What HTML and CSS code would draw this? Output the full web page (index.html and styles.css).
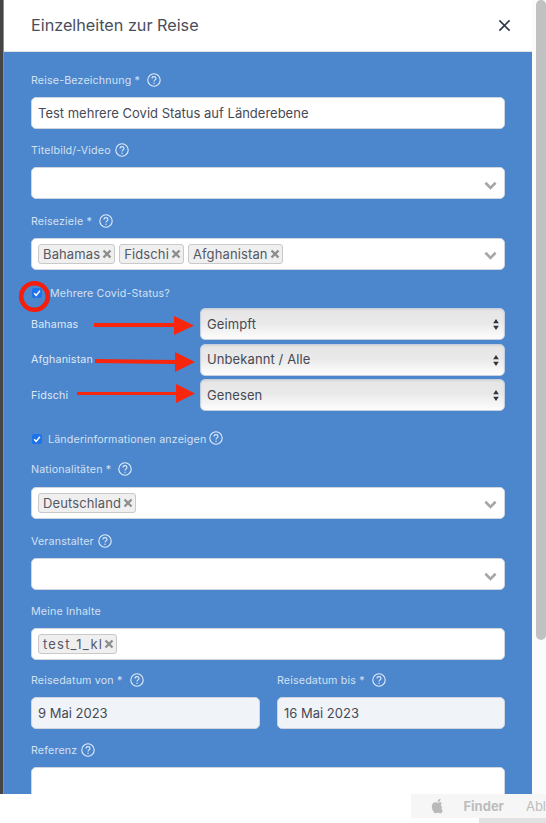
FILE: index.html
```html
<!DOCTYPE html>
<html lang="de">
<head>
<meta charset="utf-8">
<title>Einzelheiten zur Reise</title>
<link rel="stylesheet" href="styles.css">
</head>
<body>
<svg class="defs" width="0" height="0">
  <symbol id="help" viewBox="0 0 14 14">
    <circle cx="7" cy="7" r="6.200" fill="none" stroke="currentColor" stroke-width="1.100"/>
    <path d="M5 5.500C5 4.300 5.900 3.600 7 3.600s2 .8 2 1.800c0 1.500-2 1.500-2 3.100" fill="none" stroke="currentColor" stroke-width="1.100"/>
    <circle cx="7" cy="10.300" r=".7" fill="currentColor"/>
  </symbol>
  <symbol id="chev" viewBox="0 0 14 9">
    <path d="M1.500 1.500L7 7l5.500-5.500" fill="none" stroke="currentColor" stroke-width="2.800"/>
  </symbol>
  <symbol id="x" viewBox="0 0 10 10">
    <path d="M1.500 1.500l7 7M8.500 1.500l-7 7" fill="none" stroke="currentColor" stroke-width="2.400"/>
  </symbol>
  <symbol id="tick" viewBox="0 0 12 12">
    <path d="M2.500 6.300l2.500 2.500 4.500-5.500" fill="none" stroke="#fff" stroke-width="1.700"/>
  </symbol>
  <symbol id="updown" viewBox="0 0 7 14">
    <path d="M3.500 0.500L6.800 5.500H.2zM3.500 13.500L.2 8.500h6.600z" fill="#30343f"/>
  </symbol>
</svg>

<div class="screen">
  <div class="edge"></div>
  <main class="modal">
    <header class="modal-head">
      <h1 class="modal-title">Einzelheiten zur Reise</h1>
      <svg class="close" viewBox="0 0 14 14"><path d="M1.500 1.500l11 11M12.500 1.500l-11 11" fill="none" stroke="#2d3644" stroke-width="1.700"/></svg>
    </header>
    <form class="modal-body">
      <div class="field">
        <div class="label">Reise-Bezeichnung * <svg class="help star"><use href="#help"/></svg></div>
        <div class="control">Test mehrere Covid Status auf Länderebene</div>
      </div>
      <div class="field">
        <div class="label">Titelbild/-Video <svg class="help"><use href="#help"/></svg></div>
        <div class="control"><svg class="chev"><use href="#chev"/></svg></div>
      </div>
      <div class="field tight">
        <div class="label">Reiseziele * <svg class="help star"><use href="#help"/></svg></div>
        <div class="control multi">
          <span class="tag">Bahamas<svg class="tag-x"><use href="#x"/></svg></span>
          <span class="tag">Fidschi<svg class="tag-x"><use href="#x"/></svg></span>
          <span class="tag">Afghanistan<svg class="tag-x"><use href="#x"/></svg></span>
          <svg class="chev"><use href="#chev"/></svg>
        </div>
      </div>
      <div class="check-row covid">
        <span class="box"><svg class="tick"><use href="#tick"/></svg></span>
        <span class="check-text">Mehrere Covid-Status?</span>
      </div>
      <div class="status-list">
        <div class="status"><span class="status-name">Bahamas</span><div class="native">Geimpft<svg class="updown"><use href="#updown"/></svg></div></div>
        <div class="status"><span class="status-name">Afghanistan</span><div class="native">Unbekannt / Alle<svg class="updown"><use href="#updown"/></svg></div></div>
        <div class="status"><span class="status-name">Fidschi</span><div class="native">Genesen<svg class="updown"><use href="#updown"/></svg></div></div>
      </div>
      <div class="check-row info">
        <span class="box"><svg class="tick"><use href="#tick"/></svg></span>
        <span class="check-text">Länderinformationen anzeigen</span>
        <svg class="help"><use href="#help"/></svg>
      </div>
      <div class="field nat">
        <div class="label">Nationalitäten * <svg class="help star"><use href="#help"/></svg></div>
        <div class="control multi">
          <span class="tag">Deutschland<svg class="tag-x"><use href="#x"/></svg></span>
          <svg class="chev"><use href="#chev"/></svg>
        </div>
      </div>
      <div class="field">
        <div class="label">Veranstalter <svg class="help"><use href="#help"/></svg></div>
        <div class="control"><svg class="chev"><use href="#chev"/></svg></div>
      </div>
      <div class="field inhalte">
        <div class="label">Meine Inhalte</div>
        <div class="control multi"><span class="tag tag-wide">test_1_kl<svg class="tag-x"><use href="#x"/></svg></span></div>
      </div>
      <div class="date-row">
        <div class="field">
          <div class="label">Reisedatum von * <svg class="help star"><use href="#help"/></svg></div>
          <div class="control date">9 Mai 2023</div>
        </div>
        <div class="field">
          <div class="label">Reisedatum bis * <svg class="help star"><use href="#help"/></svg></div>
          <div class="control date">16 Mai 2023</div>
        </div>
      </div>
      <div class="field">
        <div class="label">Referenz <svg class="help"><use href="#help"/></svg></div>
        <div class="control area"></div>
      </div>
    </form>
  </main>
  <div class="scrollbar"><div class="thumb"></div></div>
</div>

<svg class="marks" viewBox="0 0 546 823">
  <circle class="ring" cx="34.500" cy="296.500" r="13.300"/>
  <path class="arrow" d="M94 323h80v-7l20 9.500-20 9.500v-8H94z"/>
  <path class="arrow" d="M95 359l80 1v-8l20 10-20 10v-8l-80-1z"/>
  <path class="arrow" d="M77 392h99v-8l19 9.500-19 9.500v-8H77z"/>
</svg>

<div class="menubar">
  <svg class="apple" viewBox="0 0 24 24"><path d="M18.710 19.500c-.83 1.240-1.710 2.450-3.050 2.470-1.340.03-1.770-.79-3.290-.79-1.530 0-2 .77-3.270.82-1.310.05-2.300-1.320-3.140-2.530C4.250 17 2.940 12.450 4.700 9.390c.87-1.520 2.430-2.480 4.120-2.510 1.280-.02 2.500.87 3.290.87.78 0 2.260-1.070 3.290-.91.43.02 1.650.17 2.430 1.320-.06.04-1.450.85-1.440 2.530.02 2.010 1.760 2.680 1.780 2.690-.02.05-.28.95-.92 1.880M13 3.500c.73-.83 1.940-1.460 2.940-1.500.13 1.170-.34 2.350-1.040 3.190-.69.85-1.830 1.510-2.950 1.420-.15-1.150.41-2.350 1.050-3.110z"/></svg>
  <span class="menu-strong">Finder</span>
  <span class="menu-item">Abl</span>
</div>
<div class="menu-shadow"></div>
</body>
</html>
```

FILE: styles.css
```css
* { box-sizing: border-box; }
html, body { margin: 0; height: 100%; overflow: hidden; background: #fff; }
body { font-family: Inter, "Noto Sans", sans-serif; color: #464a55; position: relative; }
.defs { position: absolute; }

.screen { display: flex; height: 823px; align-items: flex-start; }
.edge { width: 4px; height: 794px; background: #454545; border-right: 1px solid #8f8f8f; flex: none; }
.modal { width: 528px; height: 794px; overflow: hidden; flex: none; display: flex; flex-direction: column; }
.modal-head { height: 52px; flex: none; display: flex; align-items: center; justify-content: space-between; padding: 0 21px 2px 27px; background: #fff; border-bottom: 1px solid #dfe3e8; }
.modal-title { margin: 0; font-size: 16.200px; font-weight: 400; color: #4a4d5a; }
.close { width: 13px; height: 13px; margin-top: 1px; }

.modal-body { flex: 1; background: #4c86cc; padding: 20px 27px 0; overflow: hidden; }
.field { margin-bottom: 14px; }
.field.tight { margin-top: 15px; margin-bottom: 0; }
.label { display: flex; align-items: center; height: 16px; margin-top: 1px; margin-bottom: 8px; font-size: 10.700px; letter-spacing: .15px; line-height: 16px; color: #d3e1f3; white-space: pre; }
.help { width: 14px; height: 14px; color: #e3edf9; flex: none; margin-top: -2px; margin-left: 1px; }
.help.star { margin-left: 4px; }

.control { position: relative; height: 32px; display: flex; align-items: center; padding: 0 6px; background: #fff; border: 1px solid #ced5df; border-radius: 5px; font-size: 13px; color: #464a55; white-space: nowrap; }
.chev { position: absolute; right: 7px; top: 13px; width: 13px; height: 9px; color: #a6a6a6; }
.multi { gap: 4px; padding: 0 6px; }
.multi .chev { top: 12px; }
.tag { display: inline-flex; align-items: center; height: 20px; padding: 0 2px 0 4px; gap: 2px; background: #efefef; border: 1px solid #c9c9c9; border-radius: 3px; font-size: 13px; letter-spacing: .12px; color: #555963; }
.tag-wide { letter-spacing: 1.200px; gap: 1px; }
.tag-x { width: 10px; height: 10px; color: #8e8e8e; }

.check-row { display: flex; align-items: center; font-size: 10.700px; letter-spacing: .15px; color: #d3e1f3; }
.covid { height: 16px; margin-top: 15px; margin-left: 1px; }
.covid .check-text { margin-left: 8px; }
.box { width: 10px; height: 10px; background: #1c74ec; border-radius: 2px; display: flex; flex: none; }
.tick { width: 10px; height: 10px; }

.status-list { display: flex; flex-direction: column; gap: 3.500px; margin-top: 7px; }
.status { display: flex; align-items: center; }
.status-name { width: 169px; flex: none; font-size: 10.700px; letter-spacing: .15px; color: #dfe9f6; }
.native { flex: 1; position: relative; height: 32px; display: flex; align-items: center; padding: 0 6px 1px; border-radius: 5px; border: 1px solid #c4d0e0; background: linear-gradient(#e6e6e6 0%, #e9e9e9 45%, #fdfdfd 100%); font-size: 13px; letter-spacing: .1px; color: #464a55; box-shadow: inset 0 1px 2px rgba(0,0,0,.08); }
.updown { position: absolute; right: 5px; top: 9px; width: 6px; height: 13px; }

.info { height: 16px; margin-top: 20px; margin-left: 1px; }
.info .check-text { margin-left: 6px; margin-right: 2px; }

.nat { margin-top: 14.500px; margin-bottom: 15px; }
.nat .label { margin-bottom: 9px; }
.inhalte { margin-bottom: 12px; }
.date-row { display: grid; grid-template-columns: 229px 228px; column-gap: 17px; margin-bottom: 14px; }
.date-row .field { margin: 0; }
.date { background: #f0f3f8; }
.area { height: 60px; align-items: flex-start; }

.scrollbar { width: 14px; height: 794px; flex: none; padding-left: 4px; background: #fbfbfb; }
.thumb { width: 10px; height: 640px; border-radius: 5px; background: #c1c1c1; }

.marks { position: absolute; left: 0; top: 0; width: 546px; height: 823px; pointer-events: none; }
.ring { fill: none; stroke: #f51d0c; stroke-width: 4.600; }
.arrow { fill: #f8260c; }

.menubar { position: absolute; left: 411px; top: 794px; width: 135px; height: 24px; display: flex; align-items: center; background: #f6f6f6; font-size: 13px; color: #bdbdbd; white-space: nowrap; overflow: hidden; }
.apple { width: 18px; height: 18px; margin-left: 18px; fill: #b9b9b9; }
.menu-strong { font-weight: 700; margin-left: 17px; }
.menu-item { margin-left: 22px; }
.menu-shadow { position: absolute; left: 479px; top: 818px; width: 67px; height: 5px; background: #e2e2e2; }
```
